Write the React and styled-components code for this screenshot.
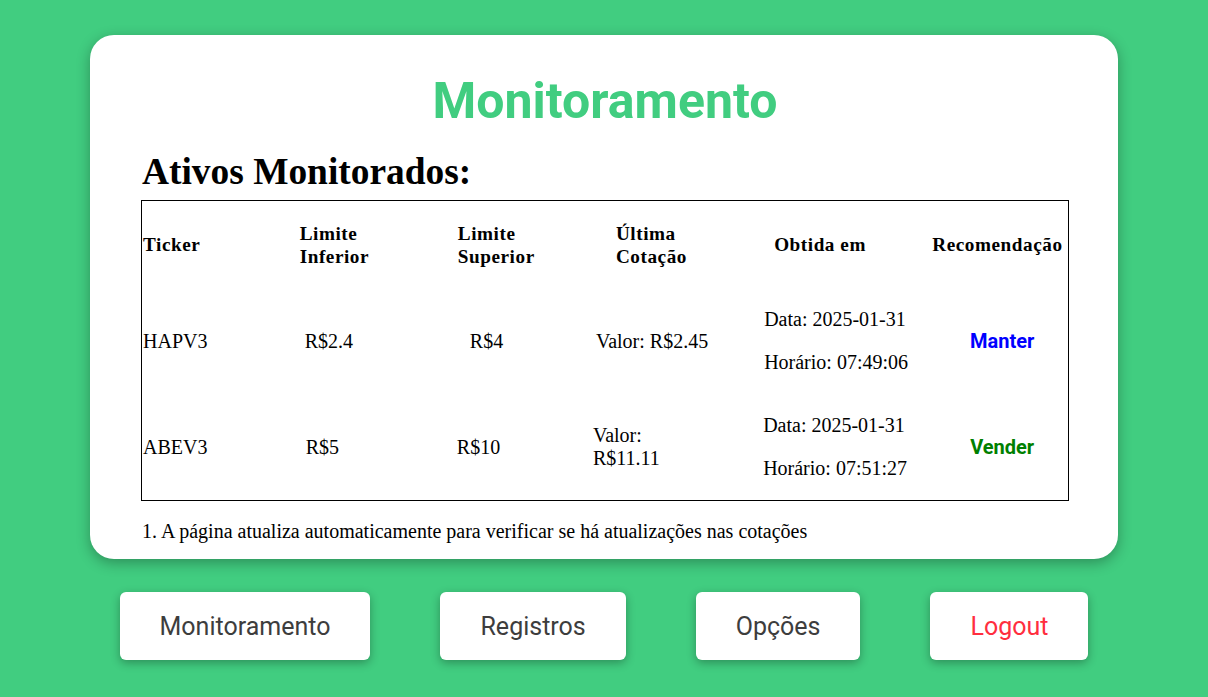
import React from "react";
import styled, { createGlobalStyle } from "styled-components";

const GlobalStyle = createGlobalStyle`
  html, body {
    margin: 0;
    padding: 0;
    background: #41cd80;
  }
  body {
    font-family: "Liberation Serif", "Times New Roman", serif;
  }
`;

const Page = styled.div`
  min-height: 697px;
  box-sizing: border-box;
  padding-top: 35px;
  display: flex;
  flex-direction: column;
  align-items: center;
`;

const Card = styled.div`
  width: 1028px;
  box-sizing: border-box;
  background: #fff;
  border-radius: 24px;
  box-shadow: 0 4px 14px rgba(0, 0, 0, 0.3);
  padding: 37px 49px 16px 51px;
`;

const Title = styled.h1`
  margin: 0;
  text-align: center;
  font-family: Roboto, "Liberation Sans", sans-serif;
  font-weight: 700;
  font-size: 50px;
  line-height: 58px;
  color: #41cd80;
`;

const Heading = styled.h2`
  margin: 20px 0 7px 1px;
  font-family: "Liberation Serif", serif;
  font-weight: 700;
  font-size: 37.4px;
  color: #000;
`;

const Table = styled.table`
  width: 928px;
  table-layout: fixed;
  border-collapse: collapse;
  border: 1px solid #000;
`;

const HeadCell = styled.th`
  padding: 0 0 0 ${(p) => p.$indent}px;
  height: 87px;
  text-align: left;
  vertical-align: middle;
  font-family: "Liberation Serif", serif;
  font-weight: 700;
  font-size: 19.2px;
  letter-spacing: 0.55px;
  line-height: 23px;
  color: #000;
`;

const HeadLabel = styled.div`
  max-width: 100px;
`;

const Cell = styled.td`
  padding: 0 0 0 ${(p) => p.$indent || 0}px;
  height: 106px;
  vertical-align: middle;
  text-align: ${(p) => (p.$center ? "center" : "left")};
  font-family: "Liberation Serif", serif;
  font-size: 20px;
  line-height: 23px;
  color: #000;
`;

const Quote = styled.div`
  max-width: 118px;
`;

const Stamp = styled.div`
  display: flex;
  flex-direction: column;
  gap: 20px;
`;

const Advice = styled.span`
  font-family: Roboto, "Liberation Sans", sans-serif;
  font-weight: 700;
  font-size: 20px;
  color: ${(p) => p.$color};
`;

const Note = styled.p`
  margin: 19px 0 0 1px;
  font-size: 20px;
  line-height: 23px;
  color: #000;
`;

const Nav = styled.nav`
  display: flex;
  gap: 70px;
  margin-top: 33px;
`;

const NavButton = styled.button`
  height: 68px;
  padding: 0 40px;
  border: none;
  border-radius: 6px;
  background: #fff;
  box-shadow: 0 3px 10px rgba(0, 0, 0, 0.3);
  font-family: Roboto, "Liberation Sans", sans-serif;
  font-size: 25px;
  color: ${(p) => (p.$danger ? "#ff2e3e" : "#3d3d3d")};
  cursor: pointer;
`;

const columns = [158, 155, 135, 170, 160, 148];

const headers = [
  { label: "Ticker", indent: 1 },
  { label: "Limite Inferior", indent: 0 },
  { label: "Limite Superior", indent: 3 },
  { label: "Última Cotação", indent: 26 },
  { label: "Obtida em", indent: 14 },
  { label: "Recomendação", indent: 12 },
];

const assets = [
  {
    ticker: "HAPV3",
    low: "R$2.4",
    high: "R$4",
    price: "R$2.45",
    date: "2025-01-31",
    time: "07:49:06",
    advice: "Manter",
    color: "#0000ff",
    indents: [1, 5, 15, 6, 4],
  },
  {
    ticker: "ABEV3",
    low: "R$5",
    high: "R$10",
    price: "R$11.11",
    date: "2025-01-31",
    time: "07:51:27",
    advice: "Vender",
    color: "#008000",
    indents: [1, 6, 2, 3, 3],
  },
];

export default function App() {
  return (
    <>
      <GlobalStyle />
      <Page>
        <Card>
          <Title>Monitoramento</Title>
          <Heading>Ativos Monitorados:</Heading>
          <Table>
            <colgroup>
              {columns.map((w, i) => (
                <col key={i} style={{ width: w }} />
              ))}
            </colgroup>
            <thead>
              <tr>
                {headers.map((h) => (
                  <HeadCell key={h.label} $indent={h.indent}>
                    <HeadLabel>{h.label}</HeadLabel>
                  </HeadCell>
                ))}
              </tr>
            </thead>
            <tbody>
              {assets.map((a) => (
                <tr key={a.ticker}>
                  <Cell $indent={a.indents[0]}>{a.ticker}</Cell>
                  <Cell $indent={a.indents[1]}>{a.low}</Cell>
                  <Cell $indent={a.indents[2]}>{a.high}</Cell>
                  <Cell $indent={a.indents[3]}>
                    <Quote>Valor: {a.price}</Quote>
                  </Cell>
                  <Cell $indent={a.indents[4]}>
                    <Stamp>
                      <span>Data: {a.date}</span>
                      <span>Horário: {a.time}</span>
                    </Stamp>
                  </Cell>
                  <Cell $center $indent={16}>
                    <Advice $color={a.color}>{a.advice}</Advice>
                  </Cell>
                </tr>
              ))}
            </tbody>
          </Table>
          <Note>
            1. A página atualiza automaticamente para verificar se há
            atualizações nas cotações
          </Note>
        </Card>
        <Nav>
          <NavButton>Monitoramento</NavButton>
          <NavButton>Registros</NavButton>
          <NavButton>Opções</NavButton>
          <NavButton $danger>Logout</NavButton>
        </Nav>
      </Page>
    </>
  );
}
